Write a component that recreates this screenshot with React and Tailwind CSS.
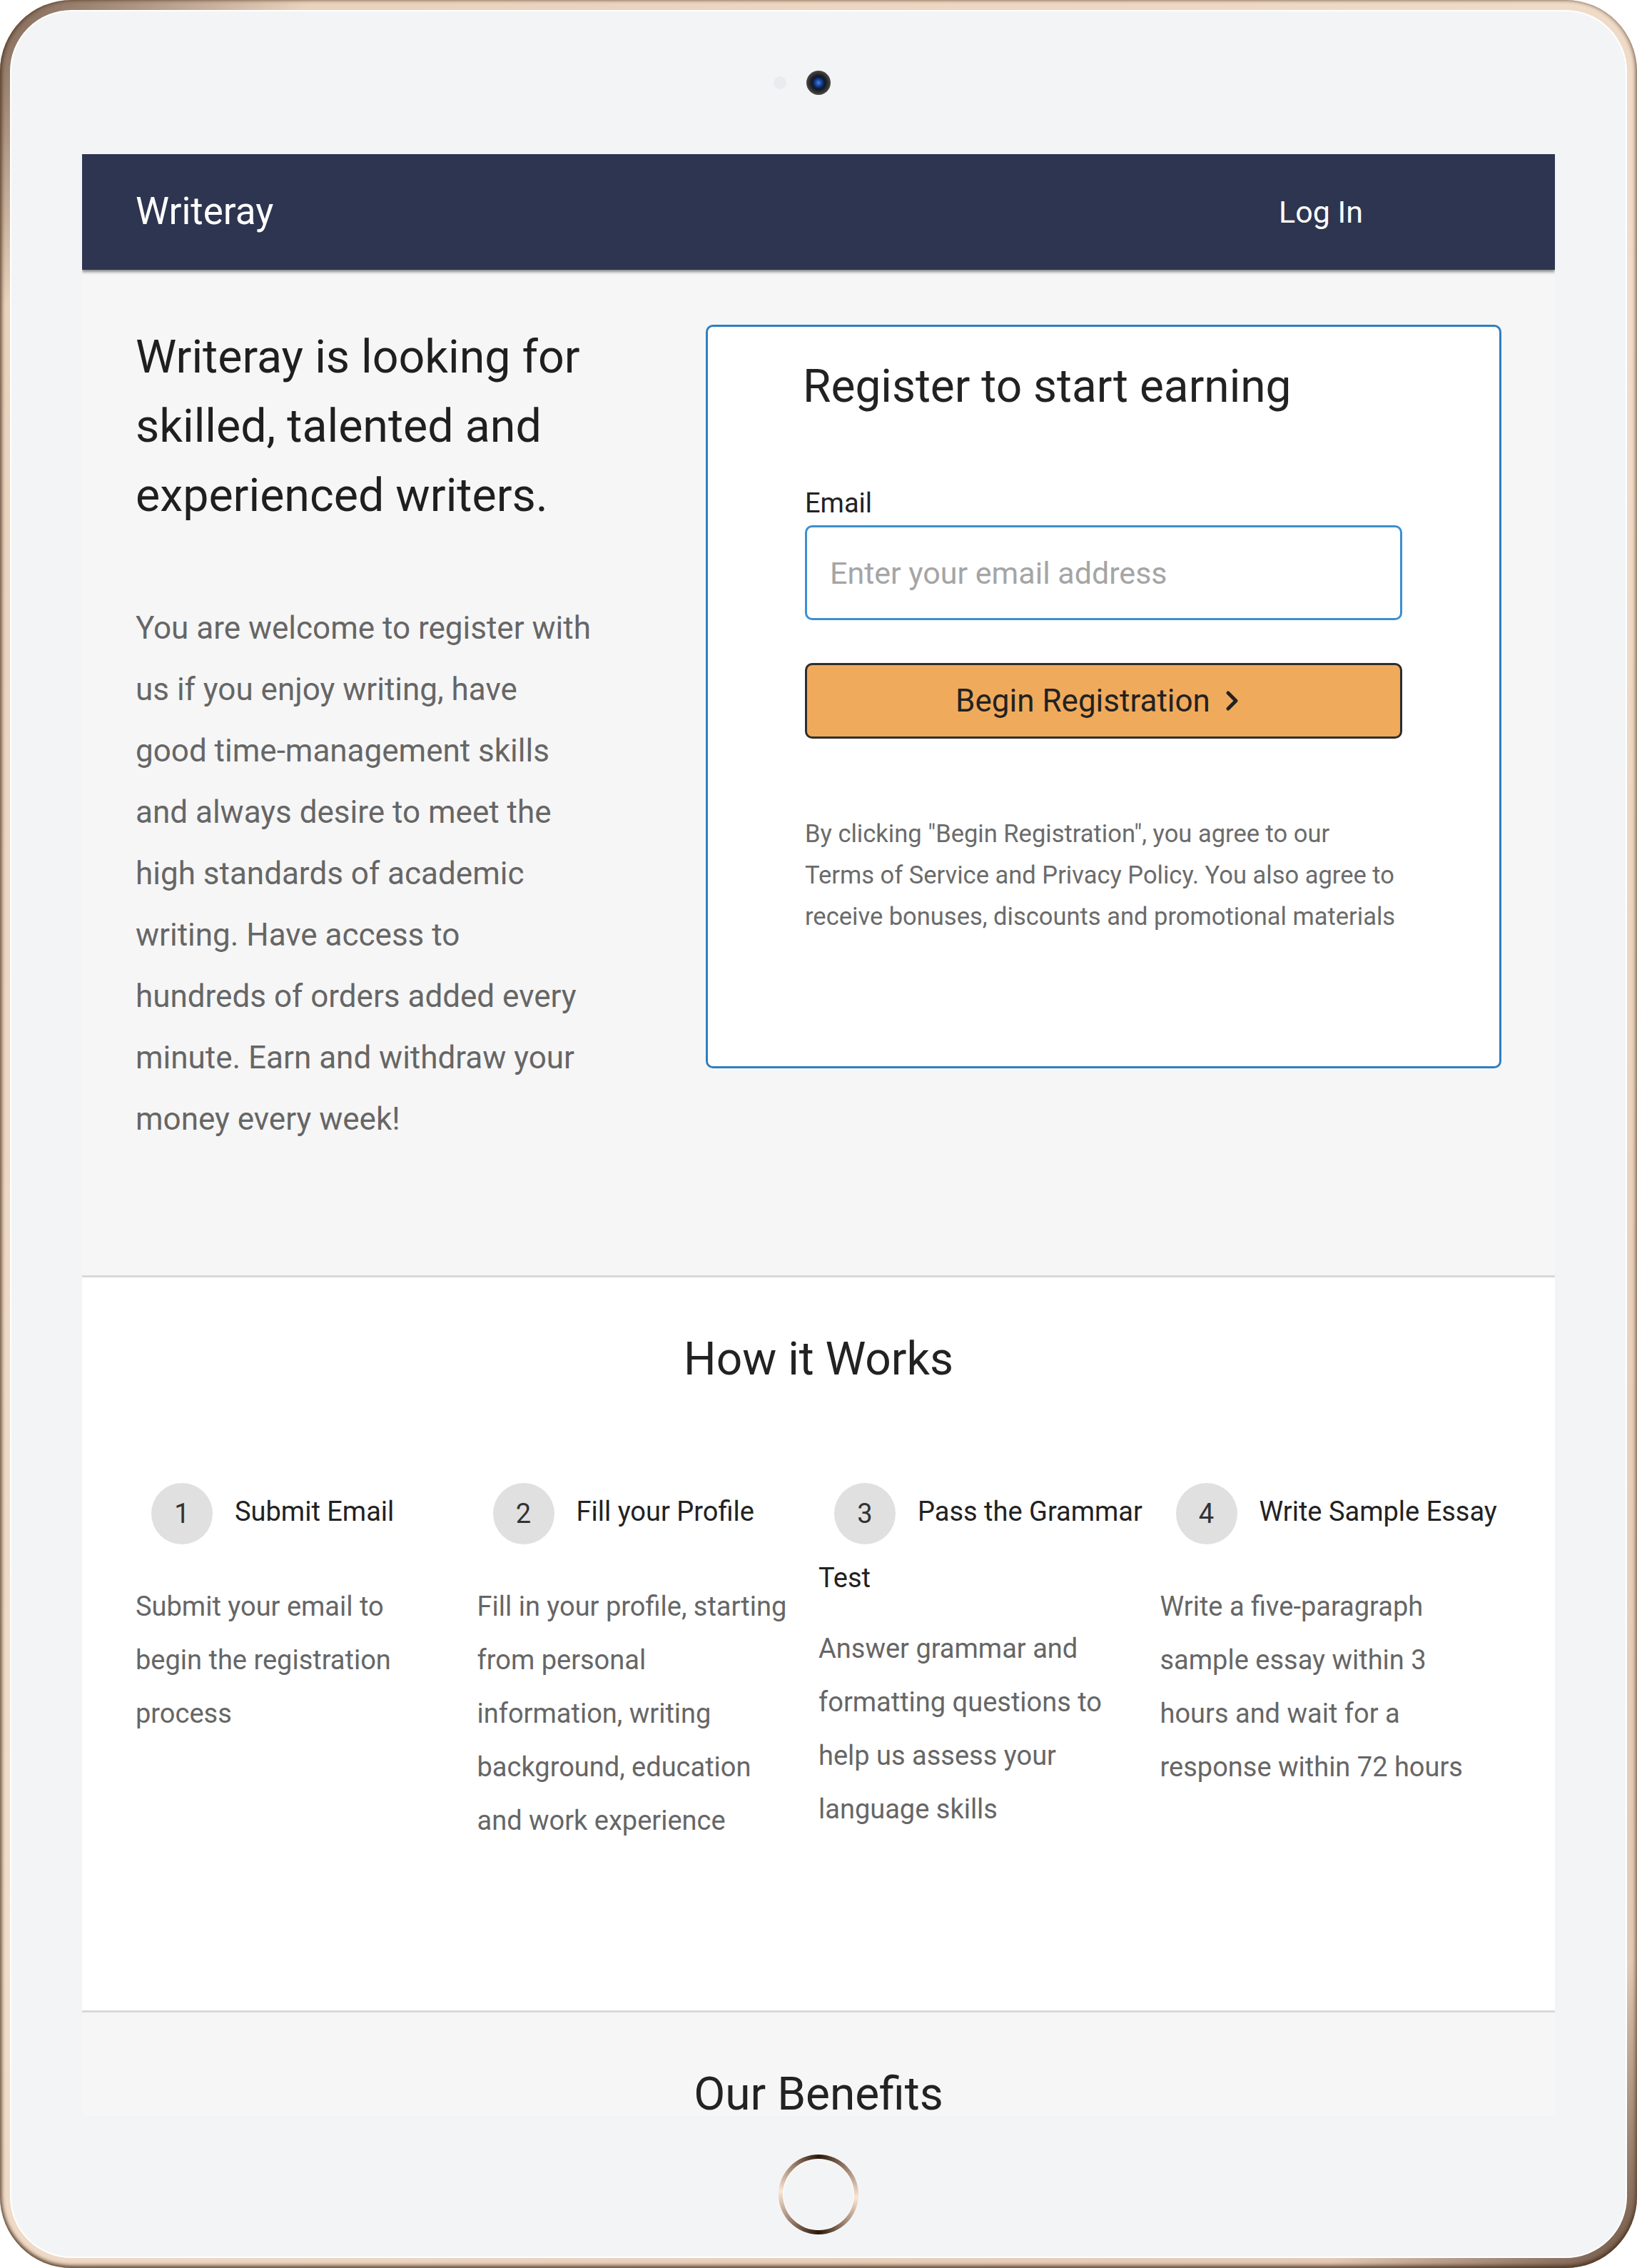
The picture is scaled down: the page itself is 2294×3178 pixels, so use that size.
import React from 'react';

const steps = [
  { n: 1, title: 'Submit Email', text: 'Submit your email to begin the registration process' },
  { n: 2, title: 'Fill your Profile', text: 'Fill in your profile, starting from personal information, writing background, education and work experience' },
  { n: 3, title: 'Pass the Grammar Test', text: 'Answer grammar and formatting questions to help us assess your language skills' },
  { n: 4, title: 'Write Sample Essay', text: 'Write a five-paragraph sample essay within 3 hours and wait for a response within 72 hours' },
];

function Camera() {
  return (
    <div className="h-[200px] flex items-center justify-center gap-[28px]">
      <div className="w-[18px] h-[18px] rounded-full bg-[#eaebee]" />
      <div className="w-[34px] h-[34px] rounded-full bg-[radial-gradient(circle,#4d80e0_0,#123a8a_22%,#0a1a3a_36%,#1f1f1f_44%,#4a4a4a_70%,#6a6a6a_90%,#3a3a3a_100%)]" />
      <div className="w-[18px] h-[18px]" />
    </div>
  );
}

function HomeButton() {
  return (
    <div className="flex-1 flex justify-center pt-[54px]">
      <div className="w-[112px] h-[112px] rounded-full p-[7px] bg-[conic-gradient(#2a170a,#8d7260_40deg,#fbe6d4_95deg,#9a7e68_140deg,#2a170a_180deg,#8d7260_220deg,#fbe6d4_275deg,#9a7e68_320deg,#2a170a)]">
        <div className="w-full h-full rounded-full bg-[#f3f4f6] shadow-[0_0_0_1px_#ffffff]" />
      </div>
    </div>
  );
}

function Step({ n, title, text }) {
  return (
    <div>
      <h3 className="text-[38px] leading-[59px] text-[#222] font-normal">
        <span className="inline-flex w-[86px] h-[86px] rounded-full bg-[#e0e0e0] items-center justify-center align-middle my-[18px] ml-[22px] mr-[31px] text-[38px] text-[#333]">
          {n}
        </span>
        {title}
      </h3>
      <p className="mt-[32px] pr-[32px] text-[38px] leading-[75px] text-[#666]">{text}</p>
    </div>
  );
}

export default function App() {
  return (
    <div className="w-[2294px] h-[3178px] bg-white font-['Roboto','Noto_Sans',sans-serif]">
      <div className="h-full rounded-[100px] p-[14px] bg-[linear-gradient(135deg,#7d6352_0%,#ead2bd_8%,#f1ddca_50%,#e4cab4_92%,#6b5242_100%)] shadow-[inset_3px_0_5px_rgba(70,45,25,0.55),inset_-3px_0_5px_rgba(70,45,25,0.35),inset_0_-4px_5px_rgba(70,45,25,0.6)]">
        <div className="h-full rounded-[86px] bg-[#f3f4f6] border-2 border-white flex flex-col">
          <Camera />

          <div className="mx-[99px] h-[2749px] shrink-0 overflow-hidden bg-[#f6f6f6] flex flex-col">
            {/* nav */}
            <div className="h-[162px] shrink-0 bg-[#2e3550] flex items-center justify-between pl-[75px] pr-[269px] relative z-10 shadow-[0_-2px_3px_rgba(0,0,0,0.25),0_3px_4px_rgba(0,0,0,0.45)]">
              <span className="text-[53px] text-white">Writeray</span>
              <span className="text-[43px] text-white">Log In</span>
            </div>

            {/* hero */}
            <div className="flex justify-between items-start px-[75px] pt-[74px] pb-[176px]">
              <div className="w-[640px]">
                <h1 className="text-[64.5px] leading-[97px] text-[#1f1f1f] font-normal">
                  Writeray is looking for skilled, talented and experienced writers.
                </h1>
                <p className="mt-[94px] text-[44px] leading-[86px] text-[#666]">
                  You are welcome to register with us if you enjoy writing, have good time-management skills and always desire to meet the high standards of academic writing. Have access to hundreds of orders added every minute. Earn and withdraw your money every week!
                </p>
              </div>

              <div className="w-[1115px] mt-[3px] bg-white border-[3px] border-[#2f7fc1] rounded-[10px] px-[136px] pt-[44px] pb-[181px]">
                <h2 className="text-[64px] leading-[80px] text-[#222] font-normal -ml-[3px]">Register to start earning</h2>
                <label className="block mt-[98px] text-[38px] leading-[50px] text-[#222]">Email</label>
                <input
                  type="email"
                  placeholder="Enter your email address"
                  className="block mt-[6px] w-full h-[133px] bg-white border-[3px] border-[#3c8fd0] rounded-[10px] px-[32px] text-[43px] text-[#222] placeholder:text-[#a5a5a5] outline-none"
                />
                <button className="mt-[60px] w-full h-[106px] bg-[#f0aa5c] border-[3px] border-[#2d2d2d] rounded-[10px] flex items-center justify-center gap-[20px] pr-[16px] text-[44px] text-[#222]">
                  Begin Registration
                  <svg width="22" height="30" viewBox="0 0 22 30" fill="none">
                    <path d="M5 4 L16 15 L5 26" stroke="#222" strokeWidth="5" strokeLinecap="round" strokeLinejoin="round" />
                  </svg>
                </button>
                <p className="mt-[104px] text-[34.5px] leading-[58px] text-[#6b6b6b]">
                  By clicking "Begin Registration", you agree to our Terms of Service and Privacy Policy. You also agree to receive bonuses, discounts and promotional materials
                </p>
              </div>
            </div>

            {/* how it works */}
            <div className="border-t-[3px] border-[#d8d8d8] bg-white px-[75px] pt-[75px] pb-[228px]">
              <h2 className="text-center text-[64px] leading-[80px] text-[#222] font-normal">How it Works</h2>
              <div className="grid grid-cols-4 mt-[115px]">
                {steps.map(s => (
                  <Step key={s.n} {...s} />
                ))}
              </div>
            </div>

            {/* benefits */}
            <div className="border-t-[3px] border-[#d8d8d8] bg-[#f6f6f6] pt-[75px]">
              <h2 className="text-center text-[64px] leading-[80px] text-[#222] font-normal">Our Benefits</h2>
            </div>
          </div>

          <HomeButton />
        </div>
      </div>
    </div>
  );
}
